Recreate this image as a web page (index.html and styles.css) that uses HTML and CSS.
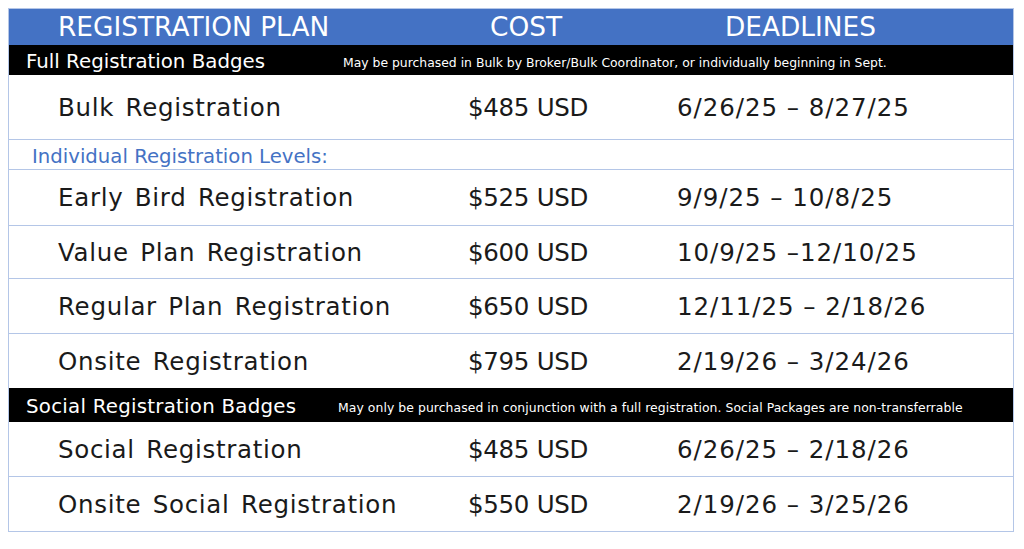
FILE: index.html
```
<!DOCTYPE html>
<html lang="en">
<head>
<meta charset="utf-8">
<title>Registration Plans</title>
<link rel="stylesheet" href="styles.css">
</head>
<body>
<div class="table">
  <div class="row head">
    <div class="cell h1">REGISTRATION PLAN</div>
    <div class="cell h2">COST</div>
    <div class="cell h3">DEADLINES</div>
  </div>
  <div class="section">
    <span class="section-title">Full Registration Badges</span>
    <span class="section-note note-full">May be purchased in Bulk by Broker/Bulk Coordinator, or individually beginning in Sept.</span>
  </div>
  <div class="row item tall">
    <div class="cell name">Bulk Registration</div>
    <div class="cell cost">$485 USD</div>
    <div class="cell date">6/26/25 – 8/27/25</div>
  </div>
  <div class="sub">Individual Registration Levels:</div>
  <div class="row item r56">
    <div class="cell name">Early Bird Registration</div>
    <div class="cell cost">$525 USD</div>
    <div class="cell date">9/9/25 – 10/8/25</div>
  </div>
  <div class="row item r53">
    <div class="cell name">Value Plan Registration</div>
    <div class="cell cost">$600 USD</div>
    <div class="cell date">10/9/25 –12/10/25</div>
  </div>
  <div class="row item r55">
    <div class="cell name">Regular Plan Registration</div>
    <div class="cell cost">$650 USD</div>
    <div class="cell date">12/11/25 – 2/18/26</div>
  </div>
  <div class="row item r54 last">
    <div class="cell name">Onsite Registration</div>
    <div class="cell cost">$795 USD</div>
    <div class="cell date">2/19/26 – 3/24/26</div>
  </div>
  <div class="section social">
    <span class="section-title">Social Registration Badges</span>
    <span class="section-note note-social">May only be purchased in conjunction with a full registration. Social Packages are non-transferrable</span>
  </div>
  <div class="row item r55">
    <div class="cell name">Social Registration</div>
    <div class="cell cost">$485 USD</div>
    <div class="cell date">6/26/25 – 2/18/26</div>
  </div>
  <div class="row item r54 last">
    <div class="cell name">Onsite Social Registration</div>
    <div class="cell cost">$550 USD</div>
    <div class="cell date">2/19/26 – 3/25/26</div>
  </div>
</div>
</body>
</html>
```
FILE: styles.css
```
body {
  margin: 8px;
  background: #ffffff;
  font-family: "DejaVu Sans", "Liberation Sans", sans-serif;
}

.table {
  width: 1004px;
  border: 1px solid #b4c6e7;
  display: flex;
  flex-direction: column;
}

.row {
  display: grid;
  grid-template-columns: 459px 209px 1fr;
  align-items: center;
  box-sizing: border-box;
}

.head {
  height: 36px;
  background: #4472c4;
  color: #ffffff;
  font-size: 26.4px;
  line-height: 1;
  padding-top: 1px;
}

.h1 { padding-left: 49px; }
.h2 { padding-left: 22px; }
.h3 { padding-left: 48px; }

.section {
  display: flex;
  align-items: center;
  box-sizing: border-box;
  background: #000000;
  color: #ffffff;
  height: 30px;
  padding-left: 17px;
  padding-top: 2px;
}

.section.social {
  height: 34px;
}

.section-title {
  font-size: 19.8px;
  width: 317px;
  flex: none;
}

.section-note {
  font-size: 12.4px;
  padding-top: 3px;
}

.social .section-title {
  width: 312px;
  letter-spacing: 0.25px;
}

.note-social { letter-spacing: 0.07px; }

.item {
  border-bottom: 1px solid #b4c6e7;
  color: #1a1a1a;
  font-size: 24.5px;
  line-height: 1;
  padding-top: 2px;
}

.item.last { border-bottom: none; }

.tall { height: 65px; }
.r56 { height: 56px; }
.r53 { height: 53px; }
.r55 { height: 55px; }
.r54 { height: 54px; }

.name {
  padding-left: 49px;
  letter-spacing: 0.7px;
  word-spacing: 3px;
}

.cost {
  letter-spacing: -0.3px;
}

.date {
  letter-spacing: 0.95px;
}

.sub {
  height: 30px;
  box-sizing: border-box;
  border-bottom: 1px solid #b4c6e7;
  display: flex;
  align-items: center;
  padding-left: 23px;
  padding-top: 3px;
  color: #4472c4;
  font-size: 19.7px;
}
```
